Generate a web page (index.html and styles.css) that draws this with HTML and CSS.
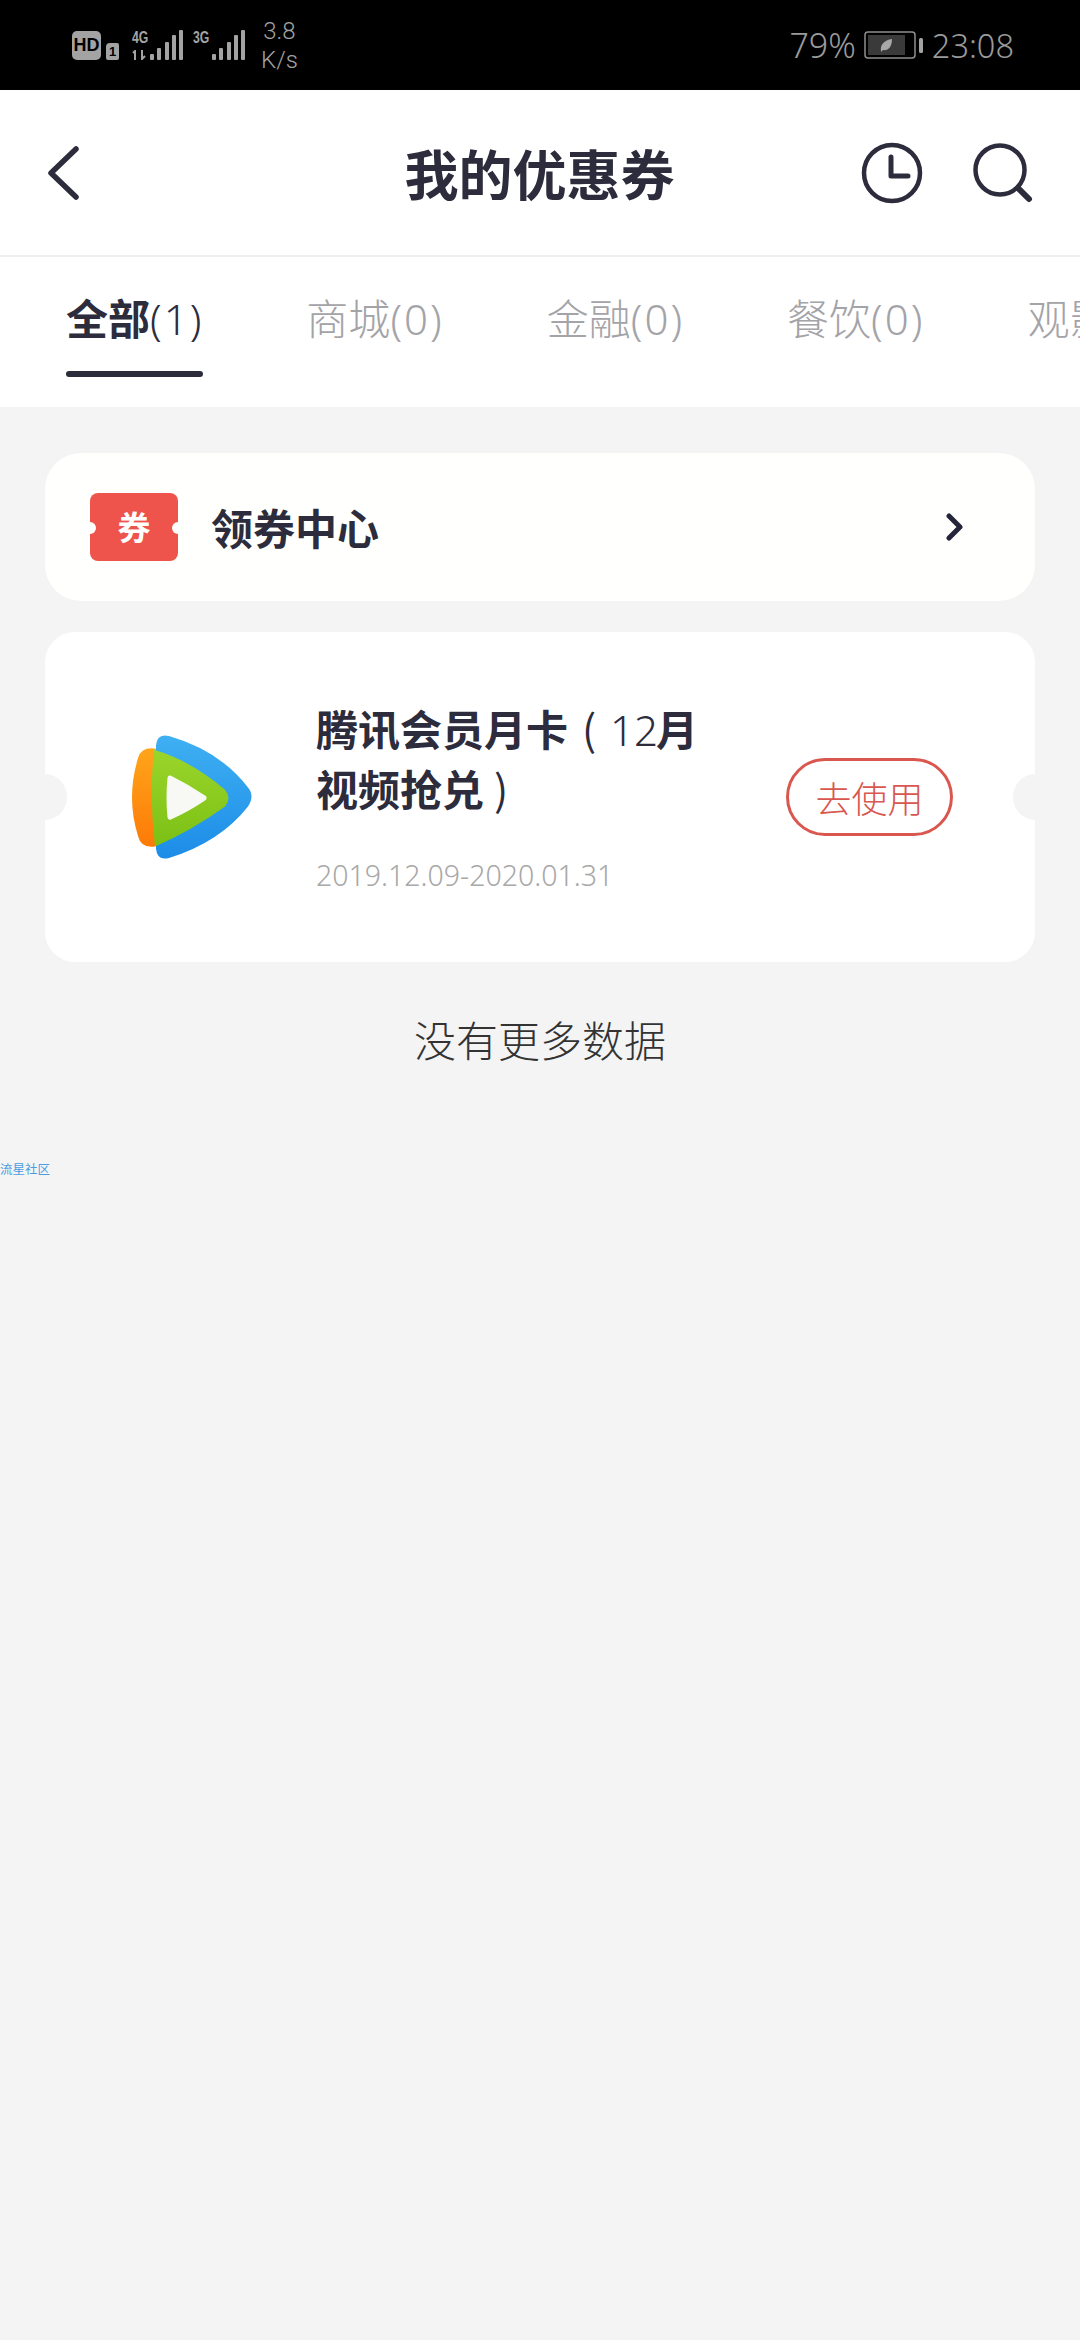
FILE: index.html
```html
<!DOCTYPE html>
<html lang="zh-CN">
<head>
    <meta charset="UTF-8">
    <meta name="viewport" content="width=device-width, initial-scale=1.0">
    <title>我的优惠券</title>
    <link rel="stylesheet" href="styles.css">
</head>
<body>
    <div class="status-bar">
        <div class="status-left">
            <span class="hd">HD</span>
            <span class="sim">1</span>
            <div class="signal signal-4g">
                <div class="net">
                    <span class="net-name">4G</span>
                    <svg class="net-arrows" width="16" height="10" viewBox="0 0 16 10">
                        <path d="M3 10V1L1 3M10 0v9l3-3" fill="none" stroke="#a3a3a3" stroke-width="2"/>
                    </svg>
                </div>
                <div class="bars">
                    <i class="bar h1"></i><i class="bar h2"></i><i class="bar h3"></i><i class="bar h4"></i><i class="bar h5"></i>
                </div>
            </div>
            <div class="signal signal-3g">
                <div class="net"><span class="net-name">3G</span></div>
                <div class="bars">
                    <i class="bar h1"></i><i class="bar h2"></i><i class="bar h3"></i><i class="bar h4"></i><i class="bar h5"></i>
                </div>
            </div>
            <div class="speed"><span>3.8</span><span>K/s</span></div>
        </div>
        <div class="status-right">
            <span class="percent">79%</span>
            <svg class="battery" width="60" height="28" viewBox="0 0 60 28">
                <rect x="1" y="1" width="50" height="26" rx="3" fill="none" stroke="#8f8f8f" stroke-width="1.5"/>
                <rect x="4" y="4" width="37" height="20" fill="#3a3a3a"/>
                <path d="M17 20c-1-6 3-11 11-12 0 7-3 12-9 11l-2 2z" fill="#a8a8a8"/>
                <rect x="55" y="7" width="4" height="15" rx="1.5" fill="#a3a3a3"/>
            </svg>
            <span class="clock">23:08</span>
        </div>
    </div>

    <div class="nav">
        <svg class="back" width="34" height="54" viewBox="0 0 34 54">
            <path d="M30 3L5 27l25 24" fill="none" stroke="#2c2c3c" stroke-width="5.5" stroke-linecap="round" stroke-linejoin="round"/>
        </svg>
        <h1 class="nav-title">我的优惠券</h1>
        <div class="nav-actions">
            <svg width="62" height="62" viewBox="0 0 62 62">
                <circle cx="31" cy="31" r="28" fill="none" stroke="#2c2c3c" stroke-width="4.5"/>
                <path d="M30 15v19h17" fill="none" stroke="#2c2c3c" stroke-width="5" stroke-linecap="round" stroke-linejoin="round"/>
            </svg>
            <svg width="60" height="60" viewBox="0 0 60 60">
                <circle cx="27" cy="27" r="24.5" fill="none" stroke="#2c2c3c" stroke-width="4.5"/>
                <path d="M45 45l11 11" fill="none" stroke="#2c2c3c" stroke-width="6" stroke-linecap="round"/>
            </svg>
        </div>
    </div>

    <div class="tabs">
        <div class="tab active"><b>全部</b><span class="count">(1)</span></div>
        <div class="tab">商城<span class="count">(0)</span></div>
        <div class="tab">金融<span class="count">(0)</span></div>
        <div class="tab">餐饮<span class="count">(0)</span></div>
        <div class="tab">观影</div>
    </div>

    <div class="content">
        <div class="center-card">
            <span class="ticket">券</span>
            <span class="center-name">领券中心</span>
            <svg class="arrow" width="18" height="28" viewBox="0 0 18 28">
                <path d="M3 3l11 11L3 25" fill="none" stroke="#24243a" stroke-width="5" stroke-linecap="round" stroke-linejoin="round"/>
            </svg>
        </div>

        <div class="coupon">
            <svg class="logo" width="122" height="124" viewBox="-4 0 122 118" preserveAspectRatio="none">
                <defs>
                    <linearGradient id="blue" x1="0" y1="0" x2="0" y2="1">
                        <stop offset="0" stop-color="#3fb0f2"/>
                        <stop offset="1" stop-color="#1c8ce8"/>
                    </linearGradient>
                    <linearGradient id="orange" x1="0" y1="0" x2="0" y2="1">
                        <stop offset="0" stop-color="#ffa51a"/>
                        <stop offset="1" stop-color="#fd7a08"/>
                    </linearGradient>
                    <linearGradient id="green" x1="0" y1="0" x2="0" y2="1">
                        <stop offset="0" stop-color="#9ad52a"/>
                        <stop offset="1" stop-color="#7cc015"/>
                    </linearGradient>
                </defs>
                <path d="M21 10Q22-2 34 1Q85 15 113 50Q120 58 113 68Q85 102 34 117Q22 120 21 108Z" fill="url(#blue)"/>
                <path d="M21 13Q6 11 3 22Q-9 60 3 96Q6 108 20 106Z" fill="url(#orange)"/>
                <path d="M19 14Q55 24 90 52Q97 60 90 68Q55 92 20 106Q14 60 19 14Z" fill="url(#green)"/>
                <path d="M35 41Q52 49 69 60Q52 71 35 78Q33 60 35 41Z" fill="#f8f9f4" stroke="#f8f9f4" stroke-width="5" stroke-linejoin="round"/>
            </svg>
            <div class="coupon-info">
                <div class="coupon-title">
                    <div>腾讯会员月卡<span class="paren">(</span><span class="num">12</span>月</div>
                    <div>视频抢兑<span class="paren paren-close">)</span></div>
                </div>
                <div class="coupon-date">2019.12.09-2020.01.31</div>
            </div>
            <div class="use-btn">去使用</div>
        </div>

        <div class="no-more">没有更多数据</div>
    </div>
    <div class="watermark">流星社区</div>
</body>
</html>
```

FILE: styles.css
```css
* {
    box-sizing: border-box;
}
body {
    margin: 0;
    height: 2340px;
    background: #f4f4f4;
    font-family: "Noto Sans", "Noto Sans CJK SC", sans-serif;
    color: #2c2c3c;
    overflow: hidden;
}

/* status bar */
.status-bar {
    height: 90px;
    background: #000;
    display: flex;
    justify-content: space-between;
    align-items: center;
    padding: 0 66px 0 72px;
    color: #9a9a9a;
}
.status-left {
    display: flex;
    align-items: flex-end;
    height: 30px;
}
.hd {
    width: 29px;
    height: 29px;
    border-radius: 5px;
    background: #a3a3a3;
    color: #000;
    font: bold 18px/29px "Liberation Sans", sans-serif;
    text-align: center;
}
.sim {
    width: 13px;
    height: 17px;
    margin-left: 5px;
    border-radius: 4px 2px 2px 2px;
    background: #a3a3a3;
    color: #000;
    font: bold 13px/17px "Liberation Sans", sans-serif;
    text-align: center;
}
.signal {
    display: flex;
    align-items: flex-end;
}
.signal-4g {
    margin-left: 13px;
}
.signal-3g {
    margin-left: 10px;
}
.net {
    display: flex;
    flex-direction: column;
    align-self: stretch;
    justify-content: space-between;
    width: 18px;
}
.signal-3g .net {
    width: 19px;
}
.net-name {
    font: bold 17px/15px "Liberation Sans", sans-serif;
    color: #a3a3a3;
    transform: scaleX(0.72);
    transform-origin: left;
}
.bars {
    display: flex;
    align-items: flex-end;
    gap: 3.25px;
}
.bar {
    width: 4px;
    background: #a3a3a3;
    border-radius: 1px;
}
.h1 { height: 6px; }
.h2 { height: 12px; }
.h3 { height: 18px; }
.h4 { height: 25px; }
.h5 { height: 30px; }
.speed {
    display: flex;
    flex-direction: column;
    margin-left: 16px;
    margin-bottom: -15px;
    font-size: 24px;
    line-height: 29px;
    font-weight: 300;
    font-family: Roboto, sans-serif;
    color: #a3a3a3;
    text-align: center;
}
.status-right {
    display: flex;
    align-items: center;
    gap: 8px;
    font-weight: 300;
}
.percent {
    font-size: 34px;
}
.clock {
    font-size: 32.5px;
}

/* nav */
.nav {
    height: 167px;
    background: #fff;
    border-bottom: 2px solid #eeeeee;
    display: grid;
    grid-template-columns: 1fr auto 1fr;
    align-items: center;
    padding: 0 47px 0 46px;
}
.nav-title {
    margin: 0;
    font-size: 54px;
    font-weight: bold;
    font-family: "Noto Sans CJK SC", sans-serif;
}
.nav-actions {
    display: flex;
    justify-content: flex-end;
    align-items: center;
    gap: 50px;
}

/* tabs */
.tabs {
    height: 150px;
    background: #fff;
    display: flex;
    gap: 103px;
    padding: 32px 0 0 66px;
    overflow: hidden;
    font-size: 42px;
    line-height: 56px;
    color: #a3a3a8;
    font-family: "Noto Sans CJK SC", sans-serif;
    font-weight: 300;
}
.tab {
    flex-shrink: 0;
}
.tab b {
    font-weight: bold;
}
.tab.active {
    color: #2c2c3c;
}
.tab.active::after {
    content: "";
    display: block;
    height: 6px;
    margin-top: 24px;
    border-radius: 3px;
    background: #2c2c3c;
}
.count {
    font-family: "Noto Sans", sans-serif;
    font-weight: 300;
    font-size: 42px;
    letter-spacing: 2px;
}

/* cards */
.content {
    padding: 46px 45px 0;
    display: flex;
    flex-direction: column;
}
.center-card {
    height: 148px;
    background: #fffffd;
    border-radius: 36px;
    display: flex;
    align-items: center;
    padding: 0 71px 0 45px;
}
.ticket {
    position: relative;
    width: 88px;
    height: 68px;
    border-radius: 8px;
    background: #ee544c;
    color: #fff;
    font: bold 33px/66px "Noto Sans CJK SC", sans-serif;
    text-align: center;
}
.ticket::before,
.ticket::after {
    content: "";
    position: absolute;
    top: 29px;
    width: 12px;
    height: 12px;
    border-radius: 50%;
    background: #fffffd;
}
.ticket::before {
    left: -6px;
}
.ticket::after {
    right: -6px;
}
.center-name {
    flex: 1;
    margin-left: 33px;
    font: bold 42px/56px "Noto Sans CJK SC", sans-serif;
}
.coupon {
    position: relative;
    height: 330px;
    margin-top: 31px;
    background: #fff;
    border-radius: 30px;
    display: flex;
    align-items: center;
    padding: 0 82px 0 86px;
}
.coupon::before,
.coupon::after {
    content: "";
    position: absolute;
    top: 142px;
    width: 44px;
    height: 46px;
    border-radius: 50%;
    background: #f4f4f4;
}
.coupon::before {
    left: -22px;
}
.coupon::after {
    right: -22px;
}
.logo {
    flex-shrink: 0;
}
.coupon-info {
    width: 400px;
    margin-left: 63px;
    margin-top: -2px;
}
.coupon-title {
    font: bold 42px/60px "Noto Sans CJK SC", sans-serif;
}
.paren {
    display: inline-block;
    width: 42px;
    text-align: center;
    font-weight: 400;
}
.paren-close {
    margin-left: -4px;
}
.num {
    font-family: "Noto Sans", sans-serif;
    font-weight: 300;
    line-height: 1;
    margin-right: -2px;
}
.coupon-date {
    margin-top: 37px;
    font-size: 28.5px;
    line-height: 40px;
    font-weight: 300;
    color: #a8a8a8;
}
.use-btn {
    margin-left: auto;
    width: 167px;
    height: 78px;
    border: 3px solid #d9574f;
    border-radius: 39px;
    color: #d9574f;
    font: 300 36px/72px "Noto Sans CJK SC", sans-serif;
    text-align: center;
}
.no-more {
    margin-top: 48px;
    font: 300 42px/58px "Noto Sans CJK SC", sans-serif;
    color: #333;
    text-align: center;
}
.watermark {
    margin-top: 92px;
    font: 12.5px/18px "Noto Sans CJK SC", sans-serif;
    color: #4a9de0;
}
```
